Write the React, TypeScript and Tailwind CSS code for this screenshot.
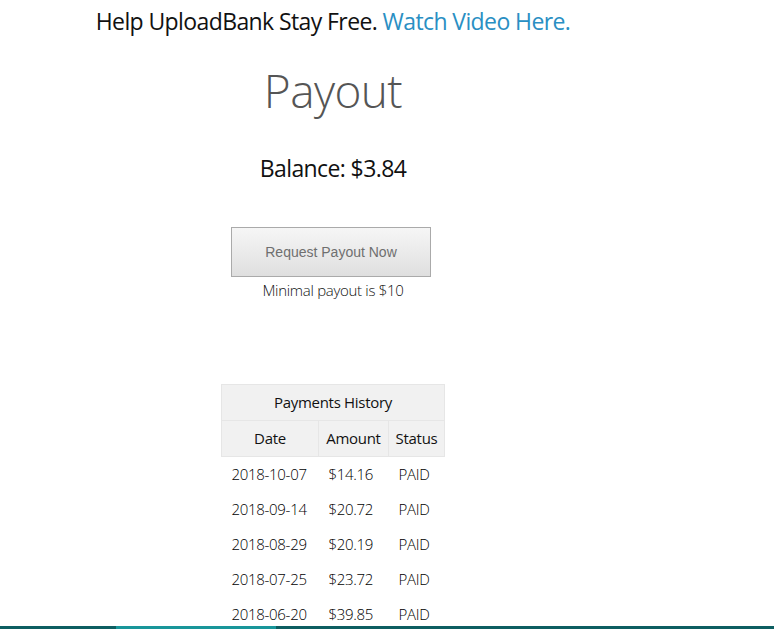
const payments = [
  { date: '2018-10-07', amount: '$14.16', status: 'PAID' },
  { date: '2018-09-14', amount: '$20.72', status: 'PAID' },
  { date: '2018-08-29', amount: '$20.19', status: 'PAID' },
  { date: '2018-07-25', amount: '$23.72', status: 'PAID' },
  { date: '2018-06-20', amount: '$39.85', status: 'PAID' },
];

export default function App() {
  return (
    <div className="min-h-screen bg-white font-['Open_Sans',sans-serif] text-[#111]">
      <div className="w-[666px] flex flex-col items-center">
        {/* promo line */}
        <p className="mt-[4px] text-[23px] leading-[34px] tracking-[-0.6px]">
          Help UploadBank Stay Free.{' '}
          <a href="#" className="text-[#2a8fc3]">Watch Video Here.</a>
        </p>

        <h1 className="mt-[20px] text-[46px] leading-[64px] font-light text-[#555] tracking-[-0.6px]">Payout</h1>

        <p className="mt-[30px] text-[23px] leading-[32px] tracking-[-0.6px]">Balance: $3.84</p>

        <button className="mt-[43px] -ml-[4px] w-[200px] h-[50px] border border-[#aaa] bg-gradient-to-b from-[#f6f6f6] to-[#dfdfdf] font-['Liberation_Sans',sans-serif] text-[14px] text-[#6f6f6f]">
          Request Payout Now
        </button>
        <p className="mt-[2px] text-[15px] leading-[22px] font-light text-[#111] tracking-[-0.3px]">Minimal payout is $10</p>

        {/* history */}
        <table className="mt-[83px] border-collapse text-[15px] tracking-[-0.3px]">
          <thead>
            <tr>
              <th colSpan={3} className="h-[36px] bg-[#f1f1f1] border border-[#e6e6e6] font-normal">
                Payments History
              </th>
            </tr>
            <tr>
              <th className="w-[97px] h-[36px] bg-[#f1f1f1] border border-[#e6e6e6] font-normal">Date</th>
              <th className="w-[70px] h-[36px] bg-[#f1f1f1] border border-[#e6e6e6] font-normal">Amount</th>
              <th className="w-[56px] h-[36px] bg-[#f1f1f1] border border-[#e6e6e6] font-normal">Status</th>
            </tr>
          </thead>
          <tbody className="font-light text-[#000]">
            {payments.map((p) => (
              <tr key={p.date} className="h-[35px]">
                <td className="pl-[10px] text-left">{p.date}</td>
                <td className="pl-[10px] text-left">{p.amount}</td>
                <td className="pl-[10px] text-left">{p.status}</td>
              </tr>
            ))}
          </tbody>
        </table>
      </div>

      {/* bottom strip */}
      <div className="fixed bottom-0 left-0 right-0 h-[3px] flex">
        <div className="w-[116px] bg-[#0d5e61]" />
        <div className="w-[160px] bg-[#18969a]" />
        <div className="flex-1 bg-[#0d5e61]" />
      </div>
    </div>
  );
}
